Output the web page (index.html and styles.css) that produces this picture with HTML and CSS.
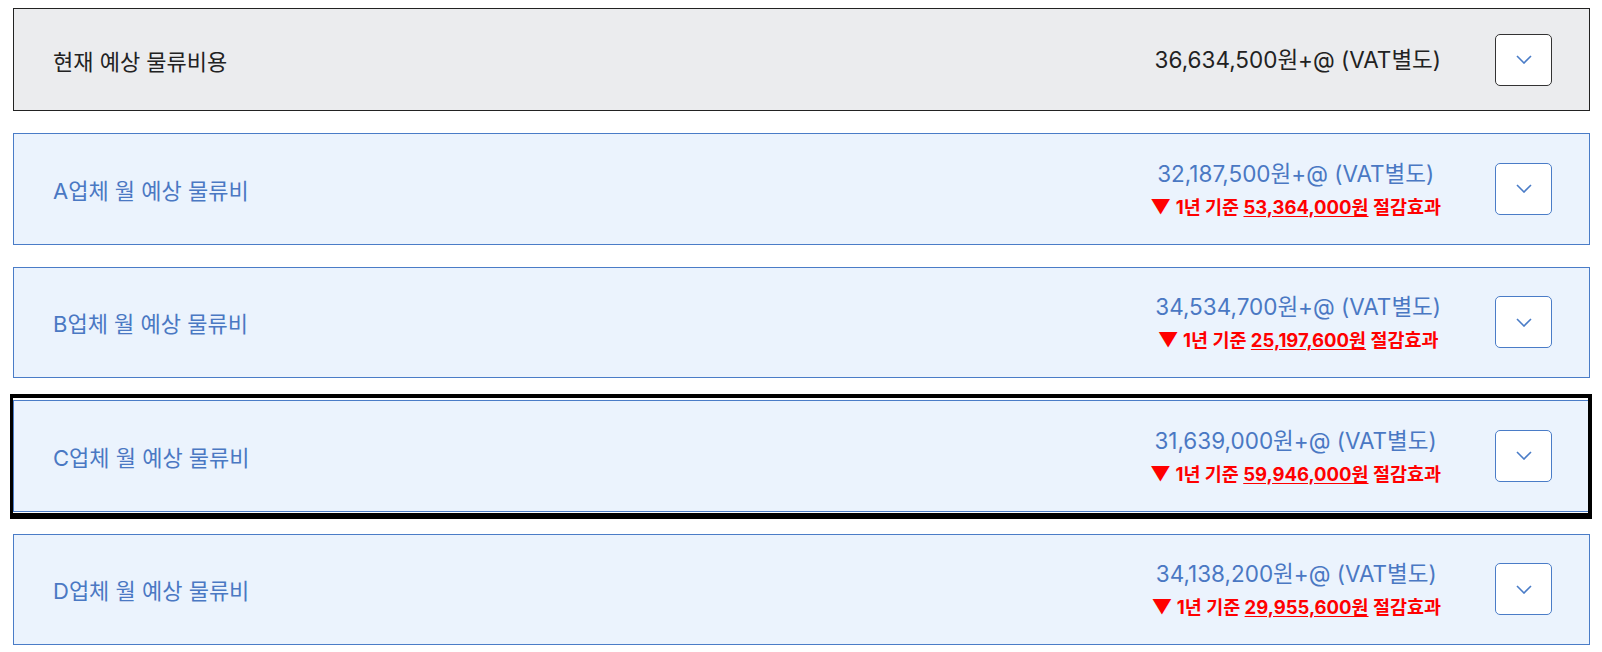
FILE: index.html
```html
<!DOCTYPE html>
<html lang="ko">
<head>
<meta charset="utf-8">
<title>물류비 비교</title>
<link rel="stylesheet" href="styles.css">
</head>
<body>
<div class="list">
  <div class="row current">
    <span class="label">현재 예상 물류비용</span>
    <div class="price">
      <div class="amount">36,634,500원+@ (VAT별도)</div>
    </div>
    <button class="toggle" type="button" aria-label="펼치기"><svg viewBox="0 0 16 9" width="16" height="9"><path d="M1 1 L8 8 L15 1" fill="none" stroke="currentColor" stroke-width="1.6"/></svg></button>
  </div>
  <div class="row vendor">
    <span class="label">A업체 월 예상 물류비</span>
    <div class="price">
      <div class="amount">32,187,500원+@ (VAT별도)</div>
      <div class="saving"><span class="tri">▼</span> 1년 기준 <u>53,364,000원</u> 절감효과</div>
    </div>
    <button class="toggle" type="button" aria-label="펼치기"><svg viewBox="0 0 16 9" width="16" height="9"><path d="M1 1 L8 8 L15 1" fill="none" stroke="currentColor" stroke-width="1.6"/></svg></button>
  </div>
  <div class="row vendor">
    <span class="label">B업체 월 예상 물류비</span>
    <div class="price">
      <div class="amount">34,534,700원+@ (VAT별도)</div>
      <div class="saving"><span class="tri">▼</span> 1년 기준 <u>25,197,600원</u> 절감효과</div>
    </div>
    <button class="toggle" type="button" aria-label="펼치기"><svg viewBox="0 0 16 9" width="16" height="9"><path d="M1 1 L8 8 L15 1" fill="none" stroke="currentColor" stroke-width="1.6"/></svg></button>
  </div>
  <div class="row vendor selected">
    <span class="label">C업체 월 예상 물류비</span>
    <div class="price">
      <div class="amount">31,639,000원+@ (VAT별도)</div>
      <div class="saving"><span class="tri">▼</span> 1년 기준 <u>59,946,000원</u> 절감효과</div>
    </div>
    <button class="toggle" type="button" aria-label="펼치기"><svg viewBox="0 0 16 9" width="16" height="9"><path d="M1 1 L8 8 L15 1" fill="none" stroke="currentColor" stroke-width="1.6"/></svg></button>
  </div>
  <div class="row vendor">
    <span class="label">D업체 월 예상 물류비</span>
    <div class="price">
      <div class="amount">34,138,200원+@ (VAT별도)</div>
      <div class="saving"><span class="tri">▼</span> 1년 기준 <u>29,955,600원</u> 절감효과</div>
    </div>
    <button class="toggle" type="button" aria-label="펼치기"><svg viewBox="0 0 16 9" width="16" height="9"><path d="M1 1 L8 8 L15 1" fill="none" stroke="currentColor" stroke-width="1.6"/></svg></button>
  </div>
</div>
</body>
</html>
```
FILE: styles.css
```css
* { box-sizing: border-box; }
html, body { margin: 0; padding: 0; background: #fff; }
body {
  font-family: Inter, "Noto Sans CJK KR", sans-serif;
  color: #222;
}
.list {
  display: flex;
  flex-direction: column;
  gap: 22px;
  padding: 8px 12px 0 13px;
}
.row {
  position: relative;
  display: flex;
  align-items: center;
  height: 111.5px;
  padding: 0 37px 0 39px;
  border: 1px solid #4a7cc7;
  background: #ebf3fd;
}
.row.current {
  height: 103px;
  background: #ebecee;
  border-color: #222;
}
.label {
  flex: 1;
  font-size: 22px;
  color: #4a78c3;
}
.current .label { color: #222; }
.price {
  margin-right: 54px;
  text-align: center;
  display: flex;
  flex-direction: column;
  align-items: center;
}
.amount {
  font-size: 22.5px;
  line-height: 32px;
  color: #4a78c3;
}
.current .amount { color: #222; }
.saving {
  font-size: 18.5px;
  line-height: 26px;
  font-weight: 700;
  color: #ff0000;
  margin-top: 4px;
}
.saving u { text-underline-offset: 2px; }
.tri { font-size: 20px; }
.toggle {
  width: 57px;
  height: 52px;
  border: 1px solid #4a7cc7;
  border-radius: 5px;
  background: #fff;
  color: #4a7cc7;
  display: flex;
  align-items: center;
  justify-content: center;
  padding: 0;
}
.current .toggle { border-color: #333; }
.selected::after {
  content: "";
  position: absolute;
  top: -7px;
  bottom: -8px;
  left: -4px;
  right: -3px;
  border-style: solid;
  border-color: #000;
  border-width: 4px 4px 6px 3px;
  pointer-events: none;
}
```
